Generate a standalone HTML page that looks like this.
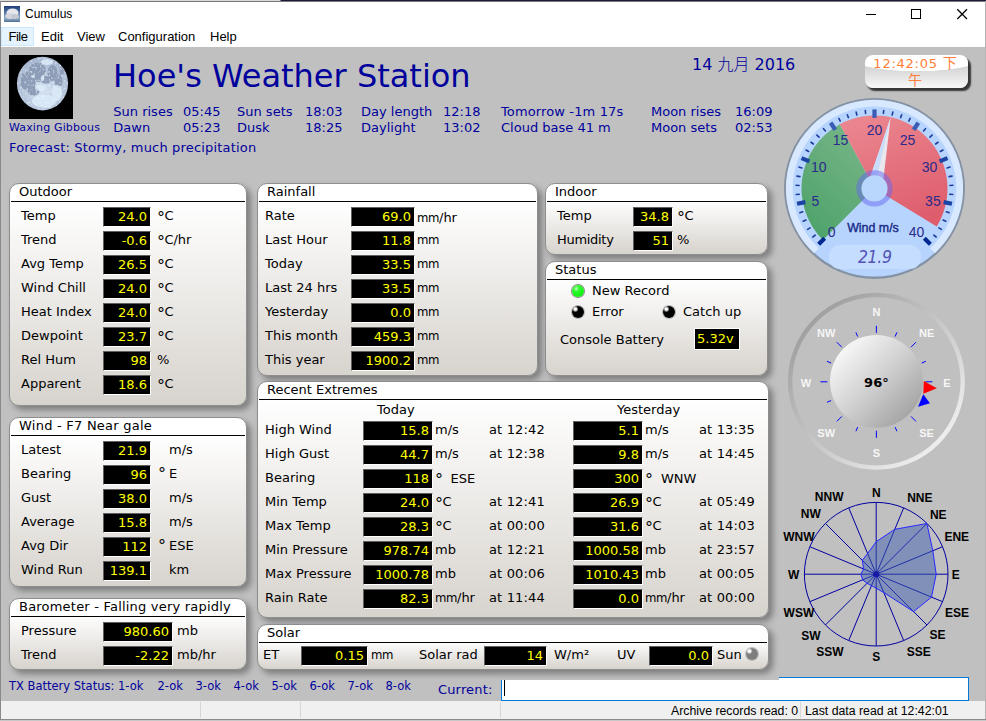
<!DOCTYPE html>
<html><head><meta charset="utf-8"><title>Cumulus</title>
<style>
html,body{margin:0;padding:0}
body{width:986px;height:721px;overflow:hidden;background:#c0c0c0;position:relative;font-family:"DejaVu Sans","Liberation Sans",sans-serif;font-size:13px;color:#000}
.t{position:absolute;white-space:nowrap;line-height:16px;height:16px}
.b{color:#00009c}
.ui{font-family:"Liberation Sans",sans-serif;font-size:12px}
.p{position:absolute;box-sizing:border-box;border:1px solid #8e8e8e;border-radius:10px;background:linear-gradient(#ffffff 0,#ffffff 16px,#d7d3cd 100%);box-shadow:4px 4px 6px rgba(0,0,0,.35)}
.ph{position:absolute;left:9px;top:0;line-height:16px;white-space:nowrap}
.pl{position:absolute;left:1px;right:1px;top:17px;height:1px;background:#000}
.mm{font-family:'DejaVu Sans Condensed','DejaVu Sans',sans-serif;letter-spacing:-.4px}
.dg{font-size:16px;line-height:0;position:relative;top:3.3px;margin-right:-.6px}
.v{position:absolute;box-sizing:border-box;background:#000;color:#ffff00;text-align:right;padding-right:3px;border-right:1px solid #fff;border-bottom:1px solid #fff;border-top:1px solid #606060;border-left:1px solid #606060;white-space:nowrap;line-height:17px}
</style></head><body>

<div style="position:absolute;left:0;top:0;width:986px;height:1px;background:linear-gradient(90deg,#d8d8d8 0,#d8d8d8 280px,#1a1a3a 281px)"></div>
<div style="position:absolute;left:0;top:1px;width:986px;height:1px;background:#787878"></div>
<div style="position:absolute;left:1px;top:2px;width:984px;height:45px;background:#fff"></div>
<svg style="position:absolute;left:4px;top:6px" width="16" height="16" viewBox="0 0 16 16"><defs><linearGradient id="ic" x1="0" y1="0" x2="0" y2="1"><stop offset="0" stop-color="#1e3c78"/><stop offset=".45" stop-color="#5d7fae"/><stop offset=".8" stop-color="#8fa6c0"/><stop offset="1" stop-color="#4a6f98"/></linearGradient></defs><rect width="16" height="16" fill="url(#ic)"/><ellipse cx="8.5" cy="7" rx="6" ry="4.5" fill="#e6e8ec"/><ellipse cx="6" cy="10" rx="5" ry="3" fill="#d4d8de"/><ellipse cx="11" cy="10.5" rx="4" ry="2.5" fill="#c4cad2"/></svg>
<div class="t ui" style="left:25px;top:6px;">Cumulus</div>
<svg style="position:absolute;left:860px;top:2px" width="124" height="25" viewBox="860 2 124 25"><path d="M866 14.5h10" stroke="#000" fill="none"/><rect x="911.5" y="9.5" width="9" height="9" stroke="#000" fill="none"/><path d="M957.3 9.3l9.7 9.7M967 9.3l-9.7 9.7" stroke="#000" stroke-width="1.25" fill="none"/></svg>
<div style="position:absolute;left:1px;top:27px;width:33px;height:19px;box-sizing:border-box;background:#e5f3ff;border:1px solid #cce8ff"></div>
<div class="t ui" style="left:8.5px;top:29px;font-size:13px"><span style="letter-spacing:-.5px">File</span></div>
<div class="t ui" style="left:41px;top:29px;font-size:13px">Edit</div>
<div class="t ui" style="left:77px;top:29px;font-size:13px">View</div>
<div class="t ui" style="left:118px;top:29px;font-size:13px">Configuration</div>
<div class="t ui" style="left:210px;top:29px;font-size:13px">Help</div>
<svg style="position:absolute;left:9px;top:55px" width="64" height="64" viewBox="9 55 64 64">
<defs><clipPath id="mc"><ellipse cx="42.5" cy="83.6" rx="25.6" ry="26.8"/></clipPath><radialGradient id="mg" cx=".5" cy=".62" r=".6"><stop offset="0" stop-color="#d6e4f3"/><stop offset=".6" stop-color="#b9c8dd"/><stop offset="1" stop-color="#a6b6ce"/></radialGradient><filter id="mn" x="0" y="0" width="1" height="1"><feTurbulence type="fractalNoise" baseFrequency=".45" numOctaves="2" seed="7" result="n"/><feColorMatrix in="n" type="matrix" values="0 0 0 0 .86  0 0 0 0 .93  0 0 0 0 1  0 0 0 3 -1.7"/><feComposite operator="in" in2="SourceGraphic"/></filter><filter id="mb"><feGaussianBlur stdDeviation=".7"/></filter></defs>
<rect x="9" y="55" width="64" height="64" fill="#000"/>
<ellipse cx="42.5" cy="83.6" rx="25.6" ry="26.8" fill="url(#mg)"/>
<g clip-path="url(#mc)"><g fill="#8e9db7" filter="url(#mb)">
<ellipse cx="37.5" cy="70" rx="8.5" ry="7.5"/>
<ellipse cx="28" cy="81" rx="8" ry="9.5"/>
<ellipse cx="33.5" cy="91" rx="6" ry="4.5"/>
<ellipse cx="52.5" cy="73" rx="5" ry="8"/>
<ellipse cx="58.5" cy="81" rx="4" ry="7"/>
<ellipse cx="46" cy="80" rx="5" ry="4"/>
<ellipse cx="62" cy="70" rx="2.5" ry="4.5"/>
<ellipse cx="38" cy="79" rx="4" ry="3"/>
</g><g fill="#dcebf8" fill-opacity=".85" filter="url(#mb)">
<ellipse cx="42.5" cy="78.5" rx="1.8" ry="2.6"/>
<ellipse cx="33" cy="76.5" rx="2" ry="1.4"/>
<ellipse cx="44" cy="101" rx="12" ry="6.5"/>
<ellipse cx="57" cy="93" rx="5" ry="8"/>
<ellipse cx="47" cy="62" rx="6" ry="3"/>
<ellipse cx="40" cy="88" rx="5" ry="3"/>
</g>
<ellipse cx="42.5" cy="83.6" rx="25.6" ry="26.8" fill="#fff" filter="url(#mn)"/>
</g></svg>
<div class="t b" style="left:9px;top:120px;font-size:11px;letter-spacing:.15px">Waxing Gibbous</div>
<div class="t b" style="left:113px;top:55px;font-size:32px;line-height:42px;height:42px">Hoe's Weather Station</div>
<div class="t b" style="left:113.3px;top:104px;">Sun rises</div>
<div class="t b" style="left:183px;top:104px;">05:45</div>
<div class="t b" style="left:237px;top:104px;">Sun sets</div>
<div class="t b" style="left:305px;top:104px;">18:03</div>
<div class="t b" style="left:361px;top:104px;">Day length</div>
<div class="t b" style="left:443px;top:104px;">12:18</div>
<div class="t b" style="left:501px;top:104px;letter-spacing:.13px">Tomorrow -1m 17s</div>
<div class="t b" style="left:651px;top:104px;">Moon rises</div>
<div class="t b" style="left:735px;top:104px;">16:09</div>
<div class="t b" style="left:113.3px;top:120px;">Dawn</div>
<div class="t b" style="left:183px;top:120px;">05:23</div>
<div class="t b" style="left:237px;top:120px;">Dusk</div>
<div class="t b" style="left:305px;top:120px;">18:25</div>
<div class="t b" style="left:361px;top:120px;">Daylight</div>
<div class="t b" style="left:443px;top:120px;">13:02</div>
<div class="t b" style="left:501px;top:120px;">Cloud base 41 m</div>
<div class="t b" style="left:651px;top:120px;">Moon sets</div>
<div class="t b" style="left:735px;top:120px;">02:53</div>
<div class="t b" style="left:9px;top:140px;letter-spacing:.18px">Forecast: Stormy, much precipitation</div>
<div class="t b" style="left:692px;top:55px;font-size:16px;line-height:20px;height:20px;font-family:'DejaVu Sans','Noto Sans CJK TC',sans-serif">14 <span style="font-weight:300">九月</span> 2016</div>
<div style="position:absolute;left:865px;top:55px;width:103px;height:33px;border-radius:8px;background:radial-gradient(75px 18.5px at 50% -2px,#fff 0,#fff 97%,rgba(255,255,255,0) 100%),linear-gradient(#fff 0,#fff 10px,#d4d4d4 11px,#dcdcdc 17px,#f8f8f8 100%);box-shadow:2.5px 3px 1.5px rgba(0,0,0,.72);color:#ff7e3a;text-align:center;font-size:13px;line-height:16px;font-family:'DejaVu Sans','Noto Sans CJK TC',sans-serif;box-sizing:border-box;padding:0 9px 0 6px;letter-spacing:.75px">12:42:05 <span style="font-size:14px;letter-spacing:0">下午</span></div>
<div style="position:absolute;left:501px;top:677px;width:468px;height:24px;box-sizing:border-box;background:#fff;border:1px solid #0078d7"><div style="position:absolute;left:2px;top:2px;width:1px;height:16px;background:#000"></div></div>
<div style="position:absolute;left:501px;top:677px;width:278px;height:3px;background:#c0c0c0"></div>
<div class="p" style="left:9px;top:183px;width:238px;height:223px"><div class="ph" style="letter-spacing:0px">Outdoor</div><div class="pl"></div></div>
<div class="t " style="left:21px;top:208px;">Temp</div>
<div class="v" style="left:103px;top:207px;width:48px;height:20px">24.0</div>
<div class="t " style="left:157px;top:208px;"><span class="dg">°</span>C</div>
<div class="t " style="left:21px;top:232px;">Trend</div>
<div class="v" style="left:103px;top:231px;width:48px;height:20px">-0.6</div>
<div class="t " style="left:157px;top:232px;"><span class="dg">°</span>C/hr</div>
<div class="t " style="left:21px;top:256px;">Avg Temp</div>
<div class="v" style="left:103px;top:255px;width:48px;height:20px">26.5</div>
<div class="t " style="left:157px;top:256px;"><span class="dg">°</span>C</div>
<div class="t " style="left:21px;top:280px;">Wind Chill</div>
<div class="v" style="left:103px;top:279px;width:48px;height:20px">24.0</div>
<div class="t " style="left:157px;top:280px;"><span class="dg">°</span>C</div>
<div class="t " style="left:21px;top:304px;">Heat Index</div>
<div class="v" style="left:103px;top:303px;width:48px;height:20px">24.0</div>
<div class="t " style="left:157px;top:304px;"><span class="dg">°</span>C</div>
<div class="t " style="left:21px;top:328px;">Dewpoint</div>
<div class="v" style="left:103px;top:327px;width:48px;height:20px">23.7</div>
<div class="t " style="left:157px;top:328px;"><span class="dg">°</span>C</div>
<div class="t " style="left:21px;top:352px;">Rel Hum</div>
<div class="v" style="left:103px;top:351px;width:48px;height:20px">98</div>
<div class="t " style="left:157px;top:352px;">%</div>
<div class="t " style="left:21px;top:376px;">Apparent</div>
<div class="v" style="left:103px;top:375px;width:48px;height:20px">18.6</div>
<div class="t " style="left:157px;top:376px;"><span class="dg">°</span>C</div>
<div class="p" style="left:9px;top:417px;width:238px;height:170px"><div class="ph" style="letter-spacing:0.24px">Wind - F7 Near gale</div><div class="pl"></div></div>
<div class="t " style="left:21px;top:442px;">Latest</div>
<div class="v" style="left:103px;top:441px;width:48px;height:20px">21.9</div>
<div class="t " style="left:169px;top:442px;">m/s</div>
<div class="t " style="left:21px;top:466px;">Bearing</div>
<div class="v" style="left:103px;top:465px;width:48px;height:20px">96</div>
<div class="t " style="left:169px;top:466px;">E</div>
<div class="t " style="left:158px;top:464.2px;"><span class="dg">°</span></div>
<div class="t " style="left:21px;top:490px;">Gust</div>
<div class="v" style="left:103px;top:489px;width:48px;height:20px">38.0</div>
<div class="t " style="left:169px;top:490px;">m/s</div>
<div class="t " style="left:21px;top:514px;">Average</div>
<div class="v" style="left:103px;top:513px;width:48px;height:20px">15.8</div>
<div class="t " style="left:169px;top:514px;">m/s</div>
<div class="t " style="left:21px;top:538px;">Avg Dir</div>
<div class="v" style="left:103px;top:537px;width:48px;height:20px">112</div>
<div class="t " style="left:169px;top:538px;">ESE</div>
<div class="t " style="left:158px;top:536.2px;"><span class="dg">°</span></div>
<div class="t " style="left:21px;top:562px;">Wind Run</div>
<div class="v" style="left:103px;top:561px;width:48px;height:20px">139.1</div>
<div class="t " style="left:169px;top:562px;">km</div>
<div class="p" style="left:9px;top:598px;width:238px;height:72px"><div class="ph" style="letter-spacing:0.21px">Barometer - Falling very rapidly</div><div class="pl"></div></div>
<div class="t " style="left:21px;top:623px;">Pressure</div>
<div class="v" style="left:103px;top:622px;width:70px;height:20px">980.60</div>
<div class="t " style="left:177px;top:623px;">mb</div>
<div class="t " style="left:21px;top:647px;">Trend</div>
<div class="v" style="left:103px;top:646px;width:70px;height:20px">-2.22</div>
<div class="t " style="left:177px;top:647px;">mb/hr</div>
<div class="p" style="left:257px;top:183px;width:281px;height:193px"><div class="ph" style="letter-spacing:0px">Rainfall</div><div class="pl"></div></div>
<div class="t " style="left:265px;top:208px;">Rate</div>
<div class="v" style="left:351px;top:207px;width:64px;height:20px">69.0</div>
<div class="t " style="left:417px;top:209.5px;"><span class="mm">mm</span>/hr</div>
<div class="t " style="left:265px;top:232px;">Last Hour</div>
<div class="v" style="left:351px;top:231px;width:64px;height:20px">11.8</div>
<div class="t " style="left:417px;top:232px;"><span class="mm">mm</span></div>
<div class="t " style="left:265px;top:256px;">Today</div>
<div class="v" style="left:351px;top:255px;width:64px;height:20px">33.5</div>
<div class="t " style="left:417px;top:256px;"><span class="mm">mm</span></div>
<div class="t " style="left:265px;top:280px;">Last 24 hrs</div>
<div class="v" style="left:351px;top:279px;width:64px;height:20px">33.5</div>
<div class="t " style="left:417px;top:280px;"><span class="mm">mm</span></div>
<div class="t " style="left:265px;top:304px;">Yesterday</div>
<div class="v" style="left:351px;top:303px;width:64px;height:20px">0.0</div>
<div class="t " style="left:417px;top:304px;"><span class="mm">mm</span></div>
<div class="t " style="left:265px;top:328px;">This month</div>
<div class="v" style="left:351px;top:327px;width:64px;height:20px">459.3</div>
<div class="t " style="left:417px;top:328px;"><span class="mm">mm</span></div>
<div class="t " style="left:265px;top:352px;">This year</div>
<div class="v" style="left:351px;top:351px;width:64px;height:20px">1900.2</div>
<div class="t " style="left:417px;top:352px;"><span class="mm">mm</span></div>
<div class="p" style="left:545px;top:183px;width:223px;height:72px"><div class="ph" style="letter-spacing:0px">Indoor</div><div class="pl"></div></div>
<div class="t " style="left:557px;top:208px;">Temp</div>
<div class="v" style="left:633px;top:207px;width:40px;height:20px">34.8</div>
<div class="t " style="left:677px;top:208px;"><span class="dg">°</span>C</div>
<div class="t " style="left:557px;top:232px;letter-spacing:-.3px">Humidity</div>
<div class="v" style="left:633px;top:231px;width:40px;height:20px">51</div>
<div class="t " style="left:677px;top:232px;">%</div>
<div class="p" style="left:545px;top:261px;width:223px;height:115px"><div class="ph" style="letter-spacing:0px">Status</div><div class="pl"></div></div>
<div style="position:absolute;left:571.5px;top:284.5px;width:12px;height:12px;border-radius:50%;background:radial-gradient(circle at 36% 30%,#b8ffb8 0,#28fa28 28%,#12ee12 75%,#0cd00c);box-shadow:0 0 0 1px #8a8a8a"></div>
<div class="t " style="left:592px;top:283px;">New Record</div>
<div style="position:absolute;left:571.5px;top:305.5px;width:12px;height:12px;border-radius:50%;background:radial-gradient(circle at 28% 26%,#fff 0,#fff 9%,#000 26%);box-shadow:0 0 0 1px #b4b4b4"></div>
<div class="t " style="left:592px;top:304px;">Error</div>
<div style="position:absolute;left:662.5px;top:305.5px;width:12px;height:12px;border-radius:50%;background:radial-gradient(circle at 28% 26%,#fff 0,#fff 9%,#000 26%);box-shadow:0 0 0 1px #b4b4b4"></div>
<div class="t " style="left:683px;top:304px;">Catch up</div>
<div class="t " style="left:560px;top:332px;">Console Battery</div>
<div class="v" style="left:694px;top:328px;width:46px;height:22px;line-height:19px;text-align:left;padding:0 0 0 2px;border-color:#fff">5.32v</div>
<div class="p" style="left:257px;top:381px;width:512px;height:237px"><div class="ph" style="letter-spacing:0px">Recent Extremes</div><div class="pl"></div></div>
<div class="t " style="left:377px;top:402px;">Today</div>
<div class="t " style="left:617px;top:402px;">Yesterday</div>
<div class="t " style="left:265px;top:422px;">High Wind</div>
<div class="v" style="left:363px;top:421px;width:70px;height:20px">15.8</div>
<div class="t " style="left:435px;top:422px;">m/s</div>
<div class="v" style="left:573px;top:421px;width:70px;height:20px">5.1</div>
<div class="t " style="left:645px;top:422px;">m/s</div>
<div class="t " style="left:489px;top:422px;;letter-spacing:.15px">at 12:42</div>
<div class="t " style="left:699px;top:422px;;letter-spacing:.15px">at 13:35</div>
<div class="t " style="left:265px;top:446px;">High Gust</div>
<div class="v" style="left:363px;top:445px;width:70px;height:20px">44.7</div>
<div class="t " style="left:435px;top:446px;">m/s</div>
<div class="v" style="left:573px;top:445px;width:70px;height:20px">9.8</div>
<div class="t " style="left:645px;top:446px;">m/s</div>
<div class="t " style="left:489px;top:446px;;letter-spacing:.15px">at 12:38</div>
<div class="t " style="left:699px;top:446px;;letter-spacing:.15px">at 14:45</div>
<div class="t " style="left:265px;top:470px;">Bearing</div>
<div class="v" style="left:363px;top:469px;width:70px;height:20px">118</div>
<div class="t " style="left:435px;top:470px;"><span class="dg">°</span></div>
<div class="v" style="left:573px;top:469px;width:70px;height:20px">300</div>
<div class="t " style="left:645px;top:470px;"><span class="dg">°</span></div>
<div class="t " style="left:450.5px;top:471px;">ESE</div>
<div class="t " style="left:661px;top:471px;">WNW</div>
<div class="t " style="left:265px;top:494px;">Min Temp</div>
<div class="v" style="left:363px;top:493px;width:70px;height:20px">24.0</div>
<div class="t " style="left:435px;top:494px;"><span class="dg">°</span>C</div>
<div class="v" style="left:573px;top:493px;width:70px;height:20px">26.9</div>
<div class="t " style="left:645px;top:494px;"><span class="dg">°</span>C</div>
<div class="t " style="left:489px;top:494px;;letter-spacing:.15px">at 12:41</div>
<div class="t " style="left:699px;top:494px;;letter-spacing:.15px">at 05:49</div>
<div class="t " style="left:265px;top:518px;">Max Temp</div>
<div class="v" style="left:363px;top:517px;width:70px;height:20px">28.3</div>
<div class="t " style="left:435px;top:518px;"><span class="dg">°</span>C</div>
<div class="v" style="left:573px;top:517px;width:70px;height:20px">31.6</div>
<div class="t " style="left:645px;top:518px;"><span class="dg">°</span>C</div>
<div class="t " style="left:489px;top:518px;;letter-spacing:.15px">at 00:00</div>
<div class="t " style="left:699px;top:518px;;letter-spacing:.15px">at 14:03</div>
<div class="t " style="left:265px;top:542px;">Min Pressure</div>
<div class="v" style="left:363px;top:541px;width:70px;height:20px">978.74</div>
<div class="t " style="left:435px;top:542px;">mb</div>
<div class="v" style="left:573px;top:541px;width:70px;height:20px">1000.58</div>
<div class="t " style="left:645px;top:542px;">mb</div>
<div class="t " style="left:489px;top:542px;;letter-spacing:.15px">at 12:21</div>
<div class="t " style="left:699px;top:542px;;letter-spacing:.15px">at 23:57</div>
<div class="t " style="left:265px;top:566px;">Max Pressure</div>
<div class="v" style="left:363px;top:565px;width:70px;height:20px">1000.78</div>
<div class="t " style="left:435px;top:566px;">mb</div>
<div class="v" style="left:573px;top:565px;width:70px;height:20px">1010.43</div>
<div class="t " style="left:645px;top:566px;">mb</div>
<div class="t " style="left:489px;top:566px;;letter-spacing:.15px">at 00:06</div>
<div class="t " style="left:699px;top:566px;;letter-spacing:.15px">at 00:05</div>
<div class="t " style="left:265px;top:590px;">Rain Rate</div>
<div class="v" style="left:363px;top:589px;width:70px;height:20px">82.3</div>
<div class="t " style="left:435px;top:590px;"><span class="mm">mm</span>/hr</div>
<div class="v" style="left:573px;top:589px;width:70px;height:20px">0.0</div>
<div class="t " style="left:645px;top:590px;"><span class="mm">mm</span>/hr</div>
<div class="t " style="left:489px;top:590px;;letter-spacing:.15px">at 11:44</div>
<div class="t " style="left:699px;top:590px;;letter-spacing:.15px">at 00:00</div>
<div class="p" style="left:257px;top:624px;width:512px;height:46px"><div class="ph" style="letter-spacing:0px">Solar</div><div class="pl"></div></div>
<div class="t " style="left:263px;top:647px;">ET</div>
<div class="v" style="left:301px;top:646px;width:67px;height:20px">0.15</div>
<div class="t " style="left:371px;top:647px;"><span class="mm">mm</span></div>
<div class="t " style="left:419px;top:647px;">Solar rad</div>
<div class="v" style="left:484px;top:646px;width:63px;height:20px">14</div>
<div class="t " style="left:554px;top:647px;">W/m²</div>
<div class="t " style="left:617px;top:647px;">UV</div>
<div class="v" style="left:649px;top:646px;width:64px;height:20px">0.0</div>
<div class="t " style="left:717px;top:647px;">Sun</div>
<div style="position:absolute;left:745.5px;top:648px;width:12px;height:12px;border-radius:50%;background:radial-gradient(circle at 28% 26%,#fff 0,#fff 9%,#7e7e7e 26%);box-shadow:0 0 0 1px #bcbcbc"></div>
<div style="position:absolute;left:1px;top:679px;width:500px;height:22px;background:#c0c0c0"></div>
<div style="position:absolute;left:969px;top:679px;width:16px;height:22px;background:#c0c0c0"></div>
<div class="t b" style="left:9px;top:678px;font-size:11.5px">TX Battery Status: 1-ok</div>
<div class="t b" style="left:157.5px;top:678px;font-size:11.5px">2-ok</div>
<div class="t b" style="left:195.5px;top:678px;font-size:11.5px">3-ok</div>
<div class="t b" style="left:233.5px;top:678px;font-size:11.5px">4-ok</div>
<div class="t b" style="left:271.5px;top:678px;font-size:11.5px">5-ok</div>
<div class="t b" style="left:309.5px;top:678px;font-size:11.5px">6-ok</div>
<div class="t b" style="left:347.5px;top:678px;font-size:11.5px">7-ok</div>
<div class="t b" style="left:385.5px;top:678px;font-size:11.5px">8-ok</div>
<div class="t b" style="left:438px;top:682px;letter-spacing:.15px">Current:</div>
<div style="position:absolute;left:1px;top:701px;width:984px;height:18px;background:#f0f0f0"></div>
<div style="position:absolute;left:501px;top:700px;width:468px;height:1px;background:#0078d7"></div>
<div style="position:absolute;left:200px;top:702px;width:1px;height:16px;background:#d7d7d7"></div>
<div style="position:absolute;left:300px;top:702px;width:1px;height:16px;background:#d7d7d7"></div>
<div style="position:absolute;left:500px;top:702px;width:1px;height:16px;background:#d7d7d7"></div>
<div style="position:absolute;left:800px;top:702px;width:1px;height:16px;background:#d7d7d7"></div>
<div class="t ui" style="left:671px;top:703px;font-size:12.3px">Archive records read: 0</div>
<div class="t ui" style="left:805px;top:703px;font-size:12.3px">Last data read at 12:42:01</div>
<div style="position:absolute;left:0;top:1px;width:1px;height:719px;background:#8a8a8a"></div>
<div style="position:absolute;left:985px;top:1px;width:1px;height:719px;background:#b4b4b4"></div>
<div style="position:absolute;left:0;top:719px;width:986px;height:1px;background:#8a8a8a"></div>
<div style="position:absolute;left:0;top:720px;width:986px;height:1px;background:#c8c8c8"></div>
<svg style="position:absolute;left:770px;top:90px" width="216" height="200" viewBox="770 90 216 200" font-family="Liberation Sans, sans-serif">
<defs>
<linearGradient id="gg" x1="0.8" y1="0" x2="0.2" y2="1"><stop offset="0" stop-color="#78b688"/><stop offset="1" stop-color="#4ea26a"/></linearGradient>
<linearGradient id="gr" x1="0.3" y1="0" x2="0.7" y2="1"><stop offset="0" stop-color="#ea858e"/><stop offset="1" stop-color="#de5c6c"/></linearGradient>
<linearGradient id="gt" x1="0" y1="0" x2="0" y2="1"><stop offset="0" stop-color="#4464b8"/><stop offset="1" stop-color="#002890"/></linearGradient>
</defs>
<circle cx="874.5" cy="188.4" r="90.5" fill="#8492a4"/>
<circle cx="874.5" cy="188.4" r="88.2" fill="#b6d4fd"/>
<path d="M816.39 250.71A85.2 85.2 0 1 1 932.61 250.71" fill="none" stroke="#d8e8ff" stroke-width="6.8"/>
<path d="M874.5 188.4L822.88 240.02A73 73 0 0 1 839.84 124.16Z" fill="url(#gg)"/>
<path d="M874.5 188.4L839.84 124.16A73 73 0 0 1 936.74 226.54Z" fill="url(#gr)"/>
<line x1="824.65" y1="238.25" x2="818.64" y2="244.26" stroke="#002890" stroke-width="4.2"/>
<line x1="815.21" y1="235.14" x2="812.85" y2="237.00" stroke="#1c3c9c" stroke-width="1.6" stroke-linecap="round"/>
<line x1="810.13" y1="227.85" x2="807.57" y2="229.42" stroke="#1c3c9c" stroke-width="1.6" stroke-linecap="round"/>
<line x1="805.94" y1="220.01" x2="803.21" y2="221.26" stroke="#1c3c9c" stroke-width="1.6" stroke-linecap="round"/>
<line x1="802.70" y1="211.73" x2="799.84" y2="212.66" stroke="#1c3c9c" stroke-width="1.6" stroke-linecap="round"/>
<line x1="805.35" y1="202.15" x2="797.02" y2="203.81" stroke="#1c44a4" stroke-width="4.2"/>
<line x1="799.23" y1="194.32" x2="796.24" y2="194.56" stroke="#1c3c9c" stroke-width="1.6" stroke-linecap="round"/>
<line x1="799.06" y1="185.44" x2="796.06" y2="185.32" stroke="#1c3c9c" stroke-width="1.6" stroke-linecap="round"/>
<line x1="799.93" y1="176.59" x2="796.97" y2="176.12" stroke="#1c3c9c" stroke-width="1.6" stroke-linecap="round"/>
<line x1="801.83" y1="167.91" x2="798.95" y2="167.09" stroke="#1c3c9c" stroke-width="1.6" stroke-linecap="round"/>
<line x1="809.37" y1="161.42" x2="801.51" y2="158.17" stroke="#1c44a4" stroke-width="4.2"/>
<line x1="808.63" y1="151.51" x2="806.01" y2="150.04" stroke="#1c3c9c" stroke-width="1.6" stroke-linecap="round"/>
<line x1="813.42" y1="144.02" x2="810.99" y2="142.26" stroke="#1c3c9c" stroke-width="1.6" stroke-linecap="round"/>
<line x1="819.06" y1="137.15" x2="816.86" y2="135.11" stroke="#1c3c9c" stroke-width="1.6" stroke-linecap="round"/>
<line x1="825.47" y1="130.99" x2="823.52" y2="128.71" stroke="#1c3c9c" stroke-width="1.6" stroke-linecap="round"/>
<line x1="835.33" y1="129.78" x2="830.61" y2="122.71" stroke="#3a5cb4" stroke-width="4.2"/>
<line x1="840.22" y1="121.13" x2="838.86" y2="118.46" stroke="#1c3c9c" stroke-width="1.6" stroke-linecap="round"/>
<line x1="848.37" y1="117.57" x2="847.33" y2="114.75" stroke="#1c3c9c" stroke-width="1.6" stroke-linecap="round"/>
<line x1="856.87" y1="114.99" x2="856.17" y2="112.07" stroke="#1c3c9c" stroke-width="1.6" stroke-linecap="round"/>
<line x1="865.63" y1="113.42" x2="865.27" y2="110.44" stroke="#1c3c9c" stroke-width="1.6" stroke-linecap="round"/>
<line x1="874.50" y1="117.90" x2="874.50" y2="109.40" stroke="#3a5cb4" stroke-width="4.2"/>
<line x1="883.37" y1="113.42" x2="883.73" y2="110.44" stroke="#1c3c9c" stroke-width="1.6" stroke-linecap="round"/>
<line x1="892.13" y1="114.99" x2="892.83" y2="112.07" stroke="#1c3c9c" stroke-width="1.6" stroke-linecap="round"/>
<line x1="900.63" y1="117.57" x2="901.67" y2="114.75" stroke="#1c3c9c" stroke-width="1.6" stroke-linecap="round"/>
<line x1="908.78" y1="121.13" x2="910.14" y2="118.46" stroke="#1c3c9c" stroke-width="1.6" stroke-linecap="round"/>
<line x1="913.67" y1="129.78" x2="918.39" y2="122.71" stroke="#3a5cb4" stroke-width="4.2"/>
<line x1="923.53" y1="130.99" x2="925.48" y2="128.71" stroke="#1c3c9c" stroke-width="1.6" stroke-linecap="round"/>
<line x1="929.94" y1="137.15" x2="932.14" y2="135.11" stroke="#1c3c9c" stroke-width="1.6" stroke-linecap="round"/>
<line x1="935.58" y1="144.02" x2="938.01" y2="142.26" stroke="#1c3c9c" stroke-width="1.6" stroke-linecap="round"/>
<line x1="940.37" y1="151.51" x2="942.99" y2="150.04" stroke="#1c3c9c" stroke-width="1.6" stroke-linecap="round"/>
<line x1="939.63" y1="161.42" x2="947.49" y2="158.17" stroke="#1c44a4" stroke-width="4.2"/>
<line x1="947.17" y1="167.91" x2="950.05" y2="167.09" stroke="#1c3c9c" stroke-width="1.6" stroke-linecap="round"/>
<line x1="949.07" y1="176.59" x2="952.03" y2="176.12" stroke="#1c3c9c" stroke-width="1.6" stroke-linecap="round"/>
<line x1="949.94" y1="185.44" x2="952.94" y2="185.32" stroke="#1c3c9c" stroke-width="1.6" stroke-linecap="round"/>
<line x1="949.77" y1="194.32" x2="952.76" y2="194.56" stroke="#1c3c9c" stroke-width="1.6" stroke-linecap="round"/>
<line x1="943.65" y1="202.15" x2="951.98" y2="203.81" stroke="#1c44a4" stroke-width="4.2"/>
<line x1="946.30" y1="211.73" x2="949.16" y2="212.66" stroke="#1c3c9c" stroke-width="1.6" stroke-linecap="round"/>
<line x1="943.06" y1="220.01" x2="945.79" y2="221.26" stroke="#1c3c9c" stroke-width="1.6" stroke-linecap="round"/>
<line x1="938.87" y1="227.85" x2="941.43" y2="229.42" stroke="#1c3c9c" stroke-width="1.6" stroke-linecap="round"/>
<line x1="933.79" y1="235.14" x2="936.15" y2="237.00" stroke="#1c3c9c" stroke-width="1.6" stroke-linecap="round"/>
<line x1="924.35" y1="238.25" x2="930.36" y2="244.26" stroke="#002890" stroke-width="4.2"/>
<text x="831.6" y="236.5" font-size="14" text-anchor="middle" fill="#2a2a8a">0</text>
<text x="815.3" y="206.0" font-size="14" text-anchor="middle" fill="#2a2a8a">5</text>
<text x="818.7" y="171.6" font-size="14" text-anchor="middle" fill="#2a2a8a">10</text>
<text x="840.6" y="144.9" font-size="14" text-anchor="middle" fill="#2a2a8a">15</text>
<text x="874.5" y="134.9" font-size="14" text-anchor="middle" fill="#2a2a8a">20</text>
<text x="907.6" y="144.9" font-size="14" text-anchor="middle" fill="#2a2a8a">25</text>
<text x="929.5" y="171.6" font-size="14" text-anchor="middle" fill="#2a2a8a">30</text>
<text x="932.9" y="206.0" font-size="14" text-anchor="middle" fill="#2a2a8a">35</text>
<text x="916.6" y="236.5" font-size="14" text-anchor="middle" fill="#2a2a8a">40</text>
<text x="873.0" y="232" font-size="12.4" text-anchor="middle" fill="#1a2a8a" stroke="#1a2a8a" stroke-width=".4">Wind m/s</text>
<rect x="829" y="245" width="92" height="24" rx="11" fill="#c5ddfe"/>
<text x="874.8" y="262.6" font-size="17.5" font-style="italic" text-anchor="middle" fill="#5454b6" font-family="DejaVu Sans Condensed, DejaVu Sans, sans-serif" letter-spacing="-0.3">21.9</text>
<path d="M866.89 186.67L890.59 117.71L882.11 190.13Z" fill="#e9e8ee"/>
<path d="M866.89 186.67L890.59 117.71L874.5 188.4Z" fill="#c9ddfb"/>
<circle cx="874.5" cy="188.4" r="13.2" fill="#b9d7fd"/>
<circle cx="874.5" cy="188.4" r="15.6" fill="none" stroke="#6868f0" stroke-width="5" stroke-opacity=".5"/>
</svg>
<svg style="position:absolute;left:770px;top:290px" width="216" height="190" viewBox="770 290 216 190" font-family="Liberation Sans, sans-serif">
<defs>
<linearGradient id="cr" x1="0" y1="0" x2="1" y2="1"><stop offset="0.1" stop-color="#9c9c9c"/><stop offset=".5" stop-color="#c6c6c6"/><stop offset=".9" stop-color="#f2f2f2"/></linearGradient>
<linearGradient id="cb" x1="0.15" y1="0.15" x2=".85" y2=".85"><stop offset="0" stop-color="#f6f6f6"/><stop offset=".5" stop-color="#d0d0d0"/><stop offset="1" stop-color="#a6a6a6"/></linearGradient>
</defs>
<circle cx="876.4" cy="381.3" r="86.3" fill="none" stroke="url(#cr)" stroke-width="4.4"/>
<line x1="876.40" y1="332.80" x2="876.40" y2="325.80" stroke="#0000ff" stroke-width="1"/>
<line x1="895.15" y1="336.53" x2="896.87" y2="332.37" stroke="#0000ff" stroke-width="1"/>
<line x1="911.05" y1="347.15" x2="916.00" y2="342.20" stroke="#0000ff" stroke-width="1"/>
<line x1="921.67" y1="363.05" x2="925.83" y2="361.33" stroke="#0000ff" stroke-width="1"/>
<line x1="925.40" y1="381.80" x2="932.40" y2="381.80" stroke="#0000ff" stroke-width="1"/>
<line x1="921.67" y1="400.55" x2="925.83" y2="402.27" stroke="#0000ff" stroke-width="1"/>
<line x1="911.05" y1="416.45" x2="916.00" y2="421.40" stroke="#0000ff" stroke-width="1"/>
<line x1="895.15" y1="427.07" x2="896.87" y2="431.23" stroke="#0000ff" stroke-width="1"/>
<line x1="876.40" y1="430.80" x2="876.40" y2="437.80" stroke="#0000ff" stroke-width="1"/>
<line x1="857.65" y1="427.07" x2="855.93" y2="431.23" stroke="#0000ff" stroke-width="1"/>
<line x1="841.75" y1="416.45" x2="836.80" y2="421.40" stroke="#0000ff" stroke-width="1"/>
<line x1="831.13" y1="400.55" x2="826.97" y2="402.27" stroke="#0000ff" stroke-width="1"/>
<line x1="827.40" y1="381.80" x2="820.40" y2="381.80" stroke="#0000ff" stroke-width="1"/>
<line x1="831.13" y1="363.05" x2="826.97" y2="361.33" stroke="#0000ff" stroke-width="1"/>
<line x1="841.75" y1="347.15" x2="836.80" y2="342.20" stroke="#0000ff" stroke-width="1"/>
<line x1="857.65" y1="336.53" x2="855.93" y2="332.37" stroke="#0000ff" stroke-width="1"/>
<circle cx="876.4" cy="381.3" r="46.4" fill="url(#cb)"/>
<text x="876.4" y="316.4" font-size="11" font-weight="bold" text-anchor="middle" fill="#f6f6f6">N</text>
<text x="926.6" y="336.7" font-size="11" font-weight="bold" text-anchor="middle" fill="#f6f6f6">NE</text>
<text x="946.9" y="386.9" font-size="11" font-weight="bold" text-anchor="middle" fill="#f6f6f6">E</text>
<text x="926.6" y="437.1" font-size="11" font-weight="bold" text-anchor="middle" fill="#f6f6f6">SE</text>
<text x="876.4" y="457.4" font-size="11" font-weight="bold" text-anchor="middle" fill="#f6f6f6">S</text>
<text x="826.2" y="437.1" font-size="11" font-weight="bold" text-anchor="middle" fill="#f6f6f6">SW</text>
<text x="805.9" y="386.9" font-size="11" font-weight="bold" text-anchor="middle" fill="#f6f6f6">W</text>
<text x="826.2" y="336.7" font-size="11" font-weight="bold" text-anchor="middle" fill="#f6f6f6">NW</text>
<text x="876.4" y="387.1" font-size="13" font-weight="bold" text-anchor="middle" fill="#000" font-family="DejaVu Sans, sans-serif">96°</text>
<polygon points="923.8,381.1 923.3,393.7 936.9,388.2" fill="#ff0000"/>
<polygon points="923.3,394.2 918,406.8 929.9,403.2" fill="#0000ff"/>
</svg>
<svg style="position:absolute;left:770px;top:480px" width="216" height="196" viewBox="770 480 216 196" font-family="Liberation Sans, sans-serif">
<circle cx="876.2" cy="574.2" r="71.8" fill="none" stroke="#0000a0" stroke-width="1"/>
<line x1="876.2" y1="574.2" x2="876.20" y2="502.40" stroke="#0000a0" stroke-width="1"/>
<line x1="876.2" y1="574.2" x2="903.68" y2="507.87" stroke="#0000a0" stroke-width="1"/>
<line x1="876.2" y1="574.2" x2="926.97" y2="523.43" stroke="#0000a0" stroke-width="1"/>
<line x1="876.2" y1="574.2" x2="942.53" y2="546.72" stroke="#0000a0" stroke-width="1"/>
<line x1="876.2" y1="574.2" x2="948.00" y2="574.20" stroke="#0000a0" stroke-width="1"/>
<line x1="876.2" y1="574.2" x2="942.53" y2="601.68" stroke="#0000a0" stroke-width="1"/>
<line x1="876.2" y1="574.2" x2="926.97" y2="624.97" stroke="#0000a0" stroke-width="1"/>
<line x1="876.2" y1="574.2" x2="903.68" y2="640.53" stroke="#0000a0" stroke-width="1"/>
<line x1="876.2" y1="574.2" x2="876.20" y2="646.00" stroke="#0000a0" stroke-width="1"/>
<line x1="876.2" y1="574.2" x2="848.72" y2="640.53" stroke="#0000a0" stroke-width="1"/>
<line x1="876.2" y1="574.2" x2="825.43" y2="624.97" stroke="#0000a0" stroke-width="1"/>
<line x1="876.2" y1="574.2" x2="809.87" y2="601.68" stroke="#0000a0" stroke-width="1"/>
<line x1="876.2" y1="574.2" x2="804.40" y2="574.20" stroke="#0000a0" stroke-width="1"/>
<line x1="876.2" y1="574.2" x2="809.87" y2="546.72" stroke="#0000a0" stroke-width="1"/>
<line x1="876.2" y1="574.2" x2="825.43" y2="523.43" stroke="#0000a0" stroke-width="1"/>
<line x1="876.2" y1="574.2" x2="848.72" y2="507.87" stroke="#0000a0" stroke-width="1"/>
<polygon points="876.2,541.7 894.8,529.3 926.9,523.5 932.8,550.7 936.2,574.2 931.5,597.1 913.6,611.6 883.9,592.7 876.2,588.2 871.5,585.7 867.1,583.3 862.7,579.8 860.8,574.2 863.6,569.0 862.3,560.3 867.6,553.5" fill="#4060b0" fill-opacity=".5" stroke="#2828ff" stroke-width="1"/>
<circle cx="876.2" cy="574.2" r="3" fill="#1818a8"/>
<text x="876.3" y="496.90000000000003" font-size="12" font-weight="bold" text-anchor="middle" fill="#000">N</text>
<text x="919.8" y="501.5" font-size="12" font-weight="bold" text-anchor="middle" fill="#000">NNE</text>
<text x="938.3" y="518.5999999999999" font-size="12" font-weight="bold" text-anchor="middle" fill="#000">NE</text>
<text x="956.8" y="540.5" font-size="12" font-weight="bold" text-anchor="middle" fill="#000">ENE</text>
<text x="955.7" y="578.8" font-size="12" font-weight="bold" text-anchor="middle" fill="#000">E</text>
<text x="957.1" y="616.5" font-size="12" font-weight="bold" text-anchor="middle" fill="#000">ESE</text>
<text x="937.6" y="639.0999999999999" font-size="12" font-weight="bold" text-anchor="middle" fill="#000">SE</text>
<text x="918.8" y="655.5" font-size="12" font-weight="bold" text-anchor="middle" fill="#000">SSE</text>
<text x="876.3" y="661.4" font-size="12" font-weight="bold" text-anchor="middle" fill="#000">S</text>
<text x="829.9" y="655.5" font-size="12" font-weight="bold" text-anchor="middle" fill="#000">SSW</text>
<text x="810.8" y="640.1999999999999" font-size="12" font-weight="bold" text-anchor="middle" fill="#000">SW</text>
<text x="798.9" y="616.5" font-size="12" font-weight="bold" text-anchor="middle" fill="#000">WSW</text>
<text x="793.7" y="578.8" font-size="12" font-weight="bold" text-anchor="middle" fill="#000">W</text>
<text x="798.9" y="540.5" font-size="12" font-weight="bold" text-anchor="middle" fill="#000">WNW</text>
<text x="810.8" y="517.5" font-size="12" font-weight="bold" text-anchor="middle" fill="#000">NW</text>
<text x="829.2" y="500.8" font-size="12" font-weight="bold" text-anchor="middle" fill="#000">NNW</text>
</svg>
</body></html>
